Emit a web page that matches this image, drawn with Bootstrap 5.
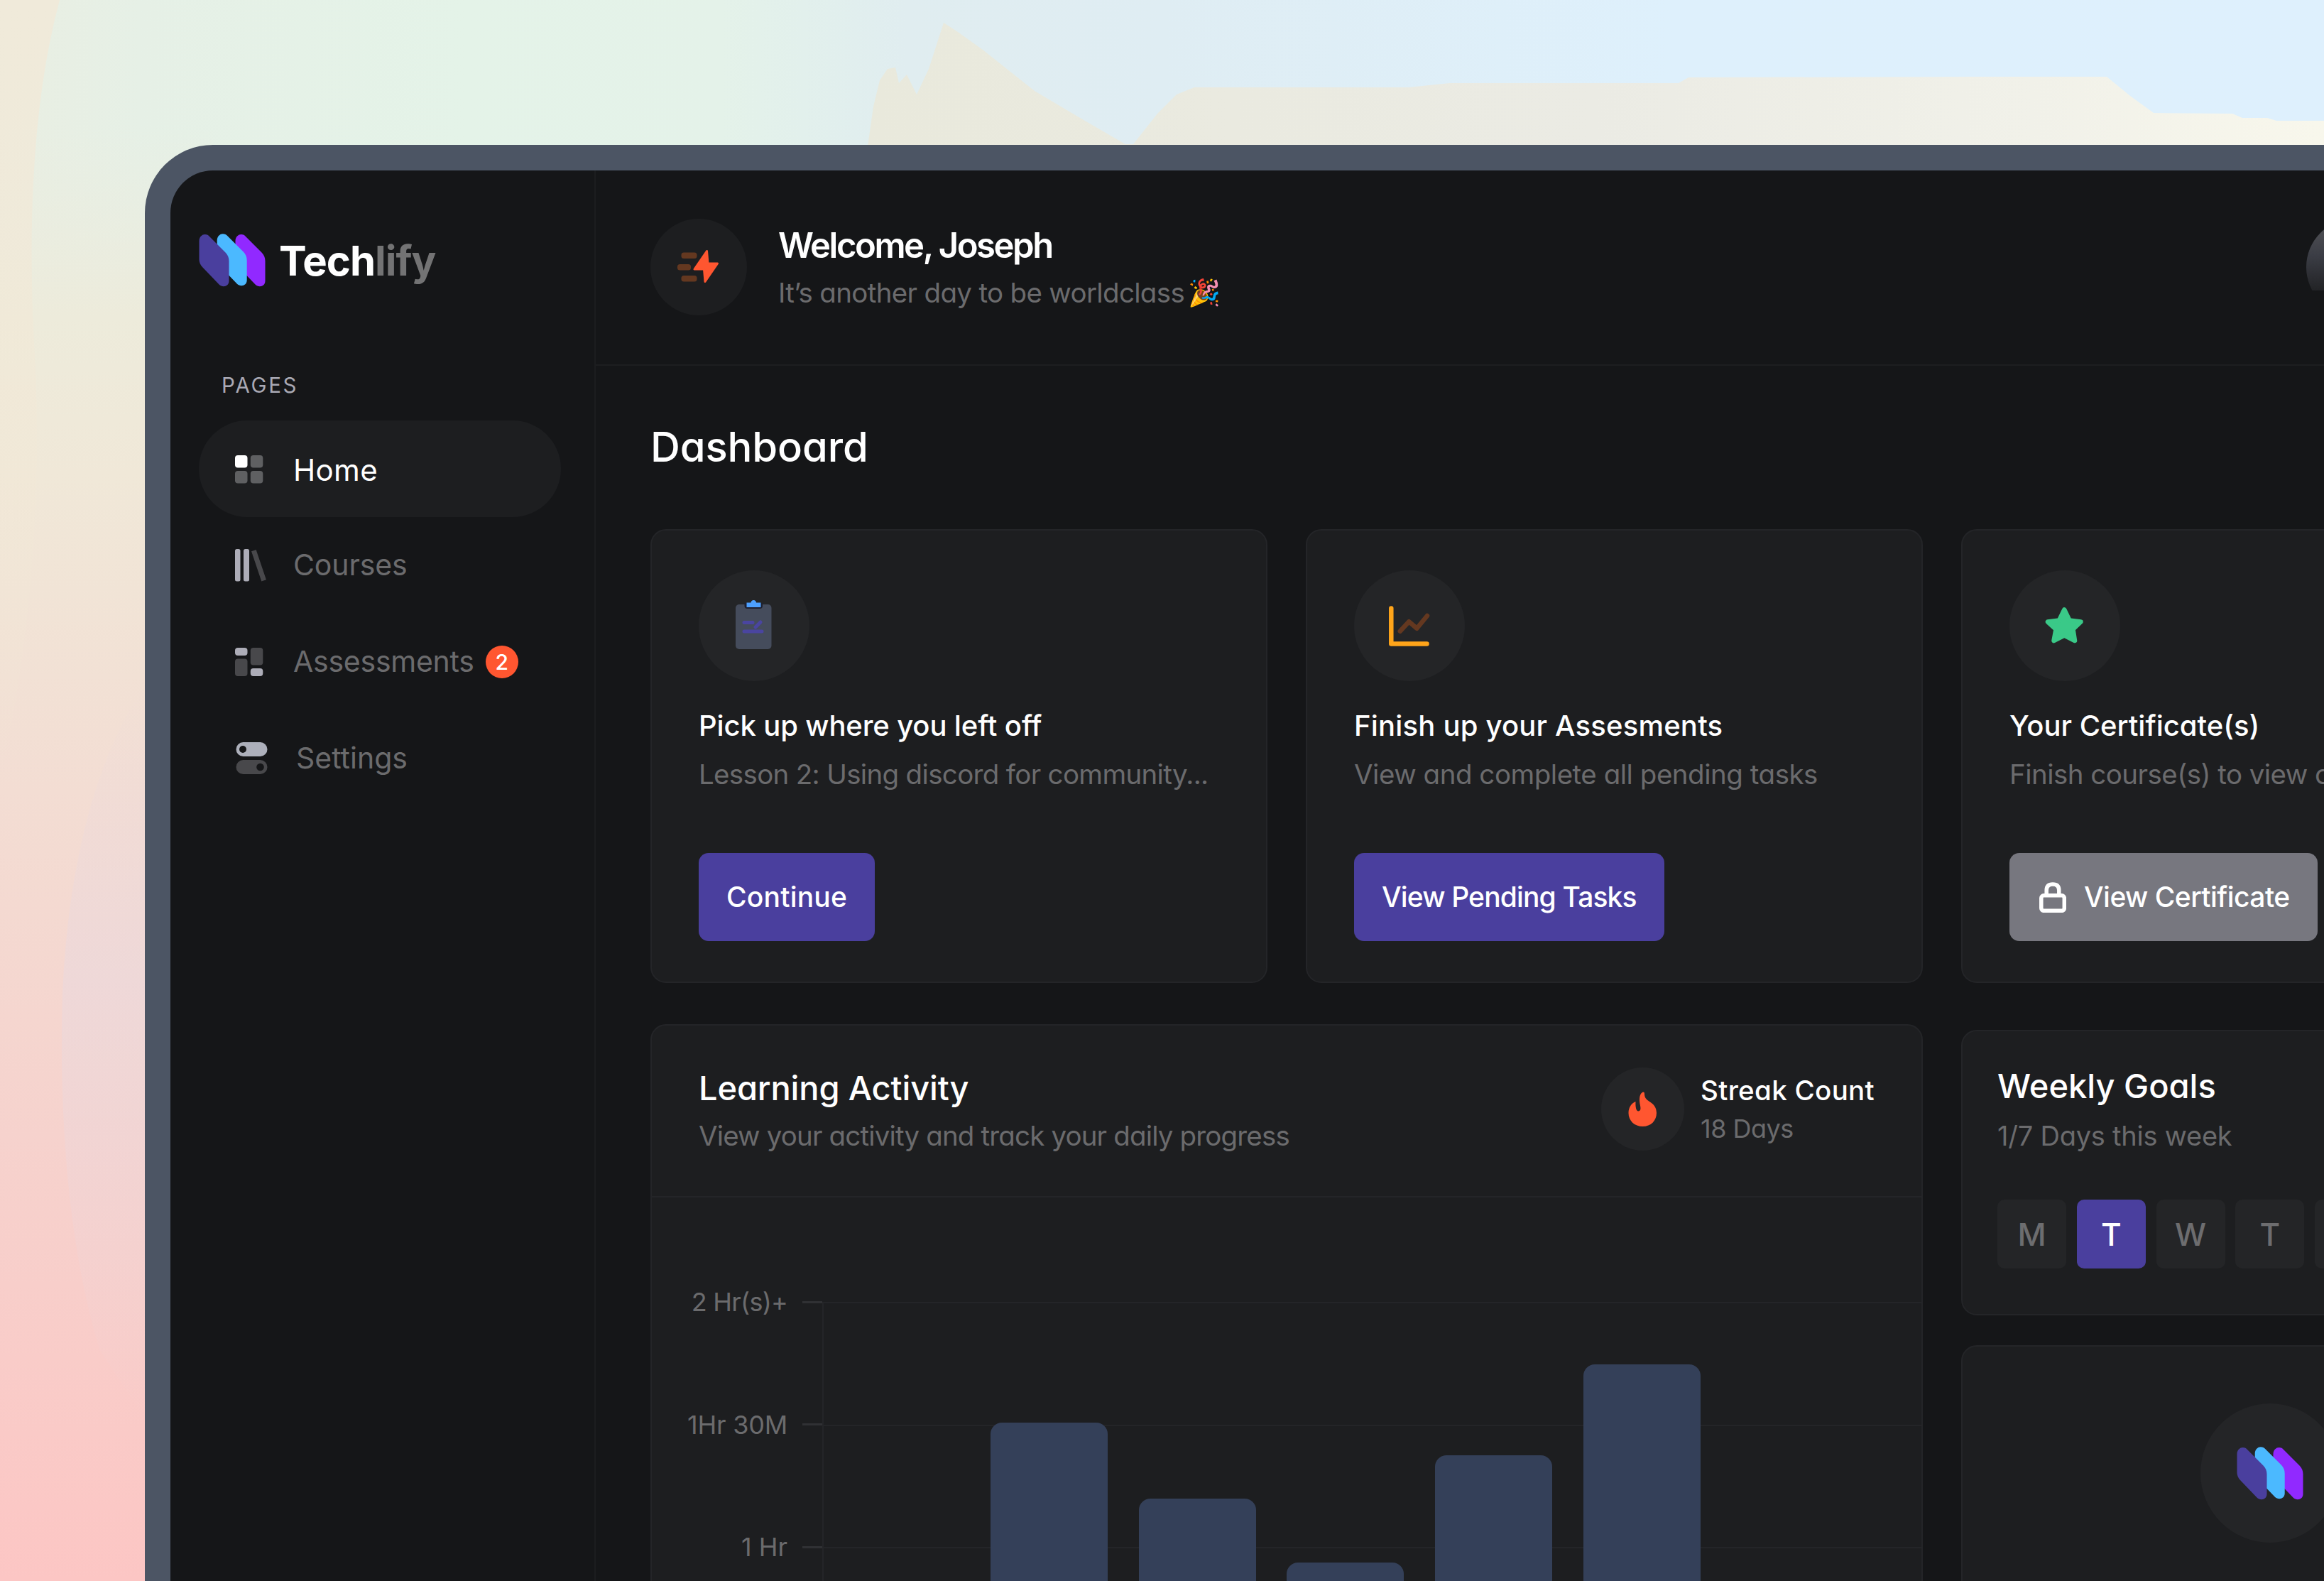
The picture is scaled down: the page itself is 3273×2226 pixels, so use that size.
<!DOCTYPE html>
<html lang="en" data-bs-theme="dark">
<head>
<meta charset="utf-8">
<meta name="viewport" content="width=device-width, initial-scale=1">
<title>Techlify – Dashboard</title>
<link href="https://cdn.jsdelivr.net/npm/bootstrap@5.3.0/dist/css/bootstrap.min.css" rel="stylesheet">
<style>
  :root {
    --ink: #151618; --panel: #1d1e20; --line: #242528; --disc: #242527;
    --dim: #6b6b6d; --brand: #4a3f9e; --ember: #ff5630; --rust: #643820; --bar: #344059;
  }
  html, body { height: 100%; }
  body {
    font-family: Inter, "Liberation Sans", sans-serif; font-feature-settings: "cv11";
    color: #fff; overflow: hidden; padding: 204px 0 0 204px; white-space: nowrap;
    background: #e4f1e9; position: relative;
  }
  svg { display: block; flex: none; }
  .backdrop { position: absolute; left: 0; top: 0; width: 3273px; height: 2226px; z-index: -1; }
  .device { width: 3541px; height: 2022px; border: 36px solid #4c5564; border-bottom: 0; border-radius: 96px 0 0 0; background: var(--ink); overflow: hidden; }

  /* sidebar */
  .side { width: 599px; border-right: 2px solid #1c1d1f; padding: 88px 47px 0 40px; }
  .brand { height: 77px; gap: 19px; font-size: 58px; font-weight: 700; line-height: 76px; letter-spacing: -.017em; }
  .brand em { font-style: normal; color: #737374; }
  .side-label { margin: 117px 0 30px 32px; line-height: 40px; font-size: 29.5px; color: #a9a9b4; letter-spacing: .092em; }
  .side .nav-link { height: 136px; border-radius: 68px; padding: 0 0 0 51px; font-size: 41px; color: var(--dim); }
  .side .nav-link.active { background: var(--panel); color: #fff; padding-top: 2px; }
  .home-txt { font-size: 42px; letter-spacing: .008em; }
  .side .ico { width: 82px; }
  .count { width: 46px; height: 46px; margin-left: 16px; background: var(--ember); color: #fff; font-size: 30px; font-weight: 500; border-radius: 50%; }

  /* header */
  .top { height: 275px; border-bottom: 2px solid #1d1e20; padding: 68px 78px 0 77px; }
  .disc { border-radius: 50%; background: var(--disc); }
  .disc-top { width: 136px; height: 136px; background: var(--panel); margin-right: 44px; }
  .hello { line-height: 67px; padding-top: 4px; }
  .hello-name { font-size: 49px; font-weight: 600; }
  .hello .sub { line-height: 67px; }
  .party { font-size: 37px; padding-left: 5px; margin-top: -3px; }
  .avatar { width: 136px; height: 136px; margin-right: 247px; border-radius: 50%; clip-path: inset(0 0 35px 0); background: linear-gradient(#4c4d52 12%, #3b3d45 38%, #222326 74%); }

  /* content */
  .content { padding: 79px 78px 0 77px; }
  .content h1 { font-size: 58px; line-height: 70px; margin: 0 0 81px; font-weight: 500; letter-spacing: -.002em; }
  .tile { background: var(--panel); border: 2px solid var(--line); border-radius: 22px; width: 869px; }
  .tile-wide { width: 1792px; }
  .gutter { gap: 54px; }
  .action { height: 639px; padding: 56px 0 0 66px; }
  .action .disc { width: 156px; height: 156px; }
  .action h2 { font-size: 40px; font-weight: 500; line-height: 60px; margin: 33px 0 8px; }
  .sub { color: var(--dim); font-size: 38.5px; line-height: 60px; }
  .btn-act { height: 124px; border: 0; border-radius: 14px; background: var(--brand); color: #fff; font-size: 39px; font-weight: 500; padding: 0 39px; margin-top: 81px; }
  .btn-locked { background: #77777f; padding-left: 42px; gap: 25px; }
  .lower { margin-top: 58px; }
  .title { font-size: 47px; font-weight: 500; line-height: 67px; }

  .act-head { height: 242px; border-bottom: 2px solid var(--line); padding: 0 66px; }
  .act-title { margin-top: 54px; }
  .act-title .sub { margin-top: 4px; }
  .streak { margin-top: 59px; line-height: 54px; }
  .streak .disc { width: 117px; height: 117px; margin-right: 23px; }
  .streak-name { font-size: 38.5px; font-weight: 500; margin-top: 5px; letter-spacing: .008em; }
  .streak .sub { font-size: 36px; line-height: 54px; }
  .plot-body { height: 900px; }
  .yaxis { width: 240px; padding-top: 61px; }
  .ylab { height: 172.6px; color: var(--dim); font-size: 36px; gap: 21px; }
  .ylab::after { content: ""; width: 28px; height: 3px; background: #303134; }
  .plot { margin-top: 147px; height: 691px; border-left: 2px solid var(--line); gap: 43.7px; padding-left: 235px;
    background: repeating-linear-gradient(var(--line) 0 2px, transparent 2px 172.6px); }
  .bar { width: 165px; background: var(--bar); border-radius: 16px 16px 0 0; }

  .goals { margin-top: 8px; height: 402px; padding: 43px 0 0 49px; }
  .goals .sub { font-size: 38px; line-height: 75px; }
  .day { width: 97px; height: 97px; border-radius: 10px; background: var(--disc); color: #6d6d6f; font-size: 44px; font-weight: 500; }
  .day.on { background: var(--brand); color: #fff; }
  .days { gap: 14.8px; margin-top: 52px; }
  .promo { margin-top: 42px; height: 400px; padding-top: 80px; }
  .promo .disc { width: 196px; height: 196px; }

  /* tracking steps */
  .ls-a { letter-spacing: -.05em; } .ls-b { letter-spacing: -.022em; } .ls-c { letter-spacing: -.0175em; }
  .ls-d { letter-spacing: -.014em; } .ls-e { letter-spacing: -.0125em; } .ls-f { letter-spacing: -.006em; }
  .ls-g { letter-spacing: -.003em; } .ls-h { letter-spacing: .005em; }
</style>
</head>
<body>

<svg class="backdrop" viewBox="0 0 3273 2226" preserveAspectRatio="none" aria-hidden="true">
  <defs>
    <linearGradient id="sky"><stop offset="0" stop-color="#e9eee2"/><stop offset=".06" stop-color="#e6f0e6"/><stop offset=".2" stop-color="#e4f3e8"/><stop offset=".31" stop-color="#e4f2e9"/><stop offset=".345" stop-color="#e2f0ec"/><stop offset=".39" stop-color="#e0edf0"/><stop offset=".5" stop-color="#dfedf3"/><stop offset=".72" stop-color="#def0fc"/><stop offset="1" stop-color="#def0fd"/></linearGradient>
    <linearGradient id="dusk" x2="0" y2="1"><stop offset=".08" stop-color="#ebecdf" stop-opacity="0"/><stop offset=".2" stop-color="#edebdb"/><stop offset=".3" stop-color="#f0e8d8"/><stop offset=".5" stop-color="#f3ddd3"/><stop offset=".72" stop-color="#f6d2cd"/><stop offset="1" stop-color="#fcc6c4"/></linearGradient>
    <linearGradient id="edge" x2="0" y2="1"><stop offset="0" stop-color="#f0eada"/><stop offset=".4" stop-color="#f2e8d6" stop-opacity=".6"/><stop offset="1" stop-color="#f2e8d6" stop-opacity="0"/></linearGradient>
    <linearGradient id="haze" x2="0" y2="1"><stop offset="0" stop-color="#e8d9e0" stop-opacity="0"/><stop offset=".4" stop-color="#e8d9e0" stop-opacity=".5"/><stop offset="1" stop-color="#e8d9e0" stop-opacity="0"/></linearGradient>
    <linearGradient id="sand"><stop offset="0" stop-color="#e9e9dc"/><stop offset=".5" stop-color="#ebebe4"/><stop offset=".8" stop-color="#f1f1e9"/><stop offset="1" stop-color="#f8f7ec"/></linearGradient>
  </defs>
  <rect width="3273" height="2226" fill="url(#sky)"/>
  <rect width="300" height="2226" fill="url(#dusk)"/>
  <path d="M0 0H84Q30 200 50 520Q60 760 20 1000L0 1100Z" fill="url(#edge)"/>
  <path d="M206 960Q100 1120 88 1400Q80 1700 140 1900L206 2000Z" fill="url(#haze)"/>
  <path fill="url(#sand)" d="M1222 206L1230 150 1239 113 1250 97 1261 95 1266 117 1277 105 1291 133 1308 97 1329 32 1349 45 1384 70 1457 128 1516 163 1585 203H1596L1630 160 1657 133 1682 123H1984L2042 117H2364L2378 109 2811 108H2967L3000 135 3033 159 3144 160 3158 166H3193L3206 170H3273V206Z"/>
</svg>

<svg width="0" height="0" class="position-absolute" aria-hidden="true">
  <symbol id="logo" viewBox="0 0 93 75">
    <path transform="translate(51 .5)" fill="#9129ff" d="M0 10C0 1 9-2 14 3L37 26Q42 31 42 38V66C42 74 33 76 28 71L5 47Q0 42 0 36Z"/>
    <path transform="translate(25.2 -.4)" fill="#4bb9ff" d="M0 10C0 1 9-2 14 3L37 26Q42 31 42 38V66C42 74 33 76 28 71L5 47Q0 42 0 36Z"/>
    <path transform="translate(0 .5)" fill="#4a3f9e" d="M0 10C0 1 9-2 14 3L37 26Q42 31 42 38V66C42 74 33 76 28 71L5 47Q0 42 0 36Z"/>
  </symbol>
</svg>

<div class="device d-flex">
  <aside class="side flex-shrink-0">
    <div class="brand d-flex align-items-center">
      <svg width="94" height="75"><use href="#logo"/></svg><span>Tech<em>lify</em></span>
    </div>
    <div class="side-label">PAGES</div>
    <nav class="nav flex-column flex-nowrap">
      <a class="nav-link active d-flex align-items-center" href="#">
        <span class="ico"><svg width="40" height="40"><rect width="17.5" height="17.5" rx="4" fill="#fff"/><g fill="#5f6062"><rect x="21.8" width="17.5" height="17.5" rx="4"/><rect y="22" width="17.5" height="17.5" rx="4"/><rect x="21.8" y="22" width="17.5" height="17.5" rx="4"/></g></svg></span>
        <span class="home-txt">Home</span></a>
      <a class="nav-link d-flex align-items-center" href="#">
        <span class="ico"><svg width="46" height="46"><rect width="7.5" height="45.5" rx="2.5" fill="#adadb8"/><rect x="12" width="8" height="45.5" rx="2.5" fill="#adadb8"/><path d="M27.500 5.500L39.500 41" stroke="#48484b" stroke-width="7" stroke-linecap="square"/></svg></span>
        <span class="ls-g">Courses</span></a>
      <a class="nav-link d-flex align-items-center" href="#">
        <span class="ico"><svg width="40" height="40"><g fill="#adadb8"><rect width="17.5" height="11" rx="4"/><rect x="21.8" y="29" width="17.5" height="11" rx="4"/></g><g fill="#48484b"><rect y="15.5" width="17.5" height="24.5" rx="4"/><rect x="21.8" width="17.5" height="24.5" rx="4"/></g></svg></span>
        <span class="ls-f">Assessments</span><span class="count d-flex align-items-center justify-content-center">2</span></a>
      <a class="nav-link d-flex align-items-center" href="#">
        <span class="ico"><svg width="48" height="46"><rect x="1.5" width="44" height="20" rx="10" fill="#adb0bb"/><circle cx="11" cy="10" r="5" fill="#151618"/><rect x="1.5" y="25" width="44" height="20" rx="10" fill="#48484b"/><circle cx="35.500" cy="35" r="5.300" fill="#151618"/></svg></span>
        <span class="ps-1">Settings</span></a>
    </nav>
  </aside>

  <main class="flex-grow-1">
    <header class="top d-flex align-items-start">
      <div class="disc disc-top flex-shrink-0">
        <svg width="136" height="136" viewBox="0 0 136 136"><g fill="#643820"><rect x="43.500" y="47.500" width="22" height="8.500" rx="3.500"/><rect x="38" y="64" width="19" height="8.500" rx="3.500"/><rect x="43.500" y="80" width="22" height="8.500" rx="3.500"/></g><path d="M79.500 45.500L62 71H75.500L77 88.500 94.500 63H81Z" fill="#ff5630" stroke="#ff5630" stroke-width="3" stroke-linejoin="round"/></svg>
      </div>
      <div class="hello">
        <div class="hello-name ls-a">Welcome, Joseph</div>
        <div class="sub d-flex align-items-center"><span class="ls-c">It’s another day to be worldclass</span><span class="party">🎉</span></div>
      </div>
      <div class="avatar ms-auto flex-shrink-0"></div>
    </header>

    <div class="content">
      <h1>Dashboard</h1>

      <div class="d-flex gutter">
        <section class="tile action flex-shrink-0">
          <div class="disc"><svg width="156" height="156"><rect x="52" y="48" width="50.500" height="63" rx="5" fill="#454c5c"/><path d="M64.500 46H90V50Q90 54 86 54H68.500Q64.500 54 64.500 50Z" fill="#1e2030"/><path d="M67.500 45.500H73.500Q74 42 77.300 42T81 45.500H87.500V52H67.500Z" fill="#4da0ff"/><path d="M64 73.500H76M64 86H89M80 80L87 73" stroke="#4a45a0" stroke-width="5" stroke-linecap="round"/></svg></div>
          <h2 class="ls-g">Pick up where you left off</h2>
          <div class="sub ls-c">Lesson 2: Using discord for community...</div>
          <button class="btn btn-act ls-h">Continue</button>
        </section>
        <section class="tile action flex-shrink-0">
          <div class="disc"><svg width="156" height="156" fill="none" stroke-linecap="round" stroke-linejoin="round"><path d="M52.300 53.500V103.500H102.500" stroke="#ffa51a" stroke-width="6.500"/><path d="M64.800 85.700L77.300 72.200 88.400 81.800 103 64" stroke="#643820" stroke-width="6.500"/></svg></div>
          <h2 class="ls-h">Finish up your Assesments</h2>
          <div class="sub ls-e">View and complete all pending tasks</div>
          <button class="btn btn-act ls-b">View Pending Tasks</button>
        </section>
        <section class="tile action flex-shrink-0">
          <div class="disc"><svg width="156" height="156"><path d="M77.300 55.500L84.500 70.500 100.500 72.500 89.500 83 92 99 77.300 91.500 62.500 99 65.500 83 54 72.500 70 70.500Z" fill="#3ac988" stroke="#3ac988" stroke-width="6.500" stroke-linejoin="round"/></svg></div>
          <h2>Your Certificate(s)</h2>
          <div class="sub ls-d">Finish course(s) to view certificate</div>
          <button class="btn btn-act btn-locked d-inline-flex align-items-center ls-d"><svg width="38" height="43" fill="none" stroke="#fff" stroke-width="5.500"><rect x="2.800" y="18.800" width="32.500" height="21.500" rx="3.500"/><path d="M10.200 18V11.500Q10.200 3 19 3T27.800 11.500V18"/></svg>View Certificate</button>
        </section>
      </div>

      <div class="d-flex gutter lower align-items-start">
        <section class="tile tile-wide flex-shrink-0">
          <div class="act-head d-flex justify-content-between">
            <div class="act-title">
              <div class="title ls-g">Learning Activity</div>
              <div class="sub ls-b">View your activity and track your daily progress</div>
            </div>
            <div class="streak d-flex">
              <div class="disc"><svg width="117" height="117"><path fill="#ff5630" d="M59 34.500C55 36 54 41 54 46C54 52 57 58 54.500 60.500C50.500 63.500 48 59 48.500 48C43 50 38.500 56 38.500 64C38.500 75 47 83 58.500 83C70 83 78 75 78 64C78 50 66 49 62.500 43C60.500 39.500 61.500 37 60.500 35Z"/></svg></div>
              <div><div class="streak-name">Streak Count</div><div class="sub ls-d">18 Days</div></div>
            </div>
          </div>
          <div class="plot-body d-flex align-items-start">
            <div class="yaxis flex-shrink-0">
              <div class="ylab d-flex align-items-center justify-content-end ls-b">2 Hr(s)+</div>
              <div class="ylab d-flex align-items-center justify-content-end ls-f">1Hr 30M</div>
              <div class="ylab d-flex align-items-center justify-content-end">1 Hr</div>
            </div>
            <div class="plot flex-grow-1 d-flex align-items-end">
              <div class="bar" style="height:521px"></div>
              <div class="bar" style="height:414px"></div>
              <div class="bar" style="height:324px"></div>
              <div class="bar" style="height:475px"></div>
              <div class="bar" style="height:603px"></div>
            </div>
          </div>
        </section>

        <div class="flex-shrink-0">
          <section class="tile goals">
            <div class="title">Weekly Goals</div>
            <div class="sub ls-f">1/7 Days this week</div>
            <div class="days d-flex">
              <div class="day d-flex align-items-center justify-content-center">M</div>
              <div class="day on d-flex align-items-center justify-content-center">T</div>
              <div class="day d-flex align-items-center justify-content-center">W</div>
              <div class="day d-flex align-items-center justify-content-center">T</div>
              <div class="day d-flex align-items-center justify-content-center">F</div>
            </div>
          </section>
          <section class="tile promo d-flex justify-content-center align-items-start">
            <div class="disc d-flex align-items-center justify-content-center"><svg width="94" height="75"><use href="#logo"/></svg></div>
          </section>
        </div>
      </div>
    </div>
  </main>
</div>
<script src="https://cdn.jsdelivr.net/npm/bootstrap@5.3.0/dist/js/bootstrap.bundle.min.js"></script>
</body>
</html>
